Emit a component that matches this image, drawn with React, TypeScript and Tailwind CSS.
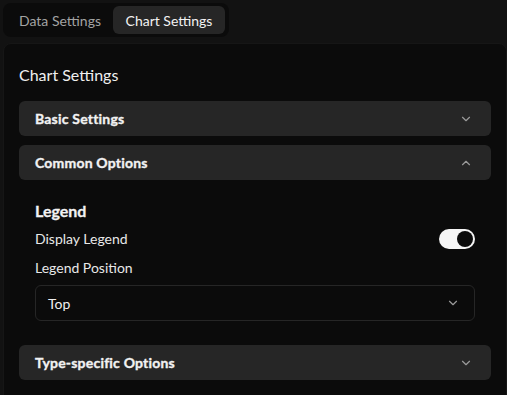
import React from "react";

const Chevron = ({ up = false }: { up?: boolean }) => (
  <svg width="14" height="14" viewBox="0 0 24 24" fill="none" stroke="#9a9a9a" strokeWidth="2" strokeLinecap="round" strokeLinejoin="round">
    {up ? <path d="m18 15-6-6-6 6" /> : <path d="m6 9 6 6 6-6" />}
  </svg>
);

const AccHeader = ({ title, up = false }: { title: string; up?: boolean }) => (
  <div className="flex h-[35px] items-center justify-between rounded-md bg-[#262626] pl-4 pr-[18px]">
    <span className="text-[14px] font-bold tracking-[0.2px] text-[#f2f2f2] [-webkit-text-stroke:0.35px_#f2f2f2]">{title}</span>
    <Chevron up={up} />
  </div>
);

export default function App() {
  return (
    <div className="h-[395px] w-[507px] overflow-hidden bg-[#121212] text-white" style={{ fontFamily: "Lato, 'Noto Sans', sans-serif" }}>
      <div className="pl-[3px] pt-[3px]">
        <div className="flex h-[34px] w-[226px] items-center gap-[12px] rounded-lg bg-[#0b0b0b] pl-[16px] pr-[4px]">
          <span className="text-[14px] text-[#a3a3a3]">Data Settings</span>
          <span className="flex h-[28px] w-[112px] items-center justify-center rounded-md bg-[#262626] text-[14px] text-[#f2f2f2]">Chart Settings</span>
        </div>
        <div className="mt-[6px] h-[400px] rounded-lg border border-[#161616] bg-[#0b0b0b] px-[15px] pt-[20px]">
          <div className="text-[16px] leading-[22px] text-[#f0f0f0]">Chart Settings</div>
          <div className="mt-[15px] flex flex-col gap-[9px]">
            <AccHeader title="Basic Settings" />
            <div>
              <AccHeader title="Common Options" up />
              <div className="px-4 pt-[20px] pb-[15px]">
                <div className="text-[16px] font-bold leading-[22px] text-[#f2f2f2] [-webkit-text-stroke:0.3px_#f2f2f2]">Legend</div>
                <div className="mt-[6px] flex items-center justify-between">
                  <span className="text-[14px] text-[#e8e8e8]">Display Legend</span>
                  <div className="flex h-[20px] w-[36px] items-center justify-end rounded-full bg-[#f5f5f5] px-[2px]">
                    <div className="h-[16px] w-[16px] rounded-full bg-[#0b0b0b]" />
                  </div>
                </div>
                <div className="mt-[9px] text-[14px] leading-[20px] text-[#e8e8e8]">Legend Position</div>
                <div className="mt-[7px] flex h-[36px] items-center justify-between rounded-md border border-[#262626] pl-[12px] pr-[14px]">
                  <span className="text-[14px] text-[#f0f0f0]">Top</span>
                  <Chevron />
                </div>
              </div>
            </div>
            <AccHeader title="Type-specific Options" />
          </div>
        </div>
      </div>
    </div>
  );
}
